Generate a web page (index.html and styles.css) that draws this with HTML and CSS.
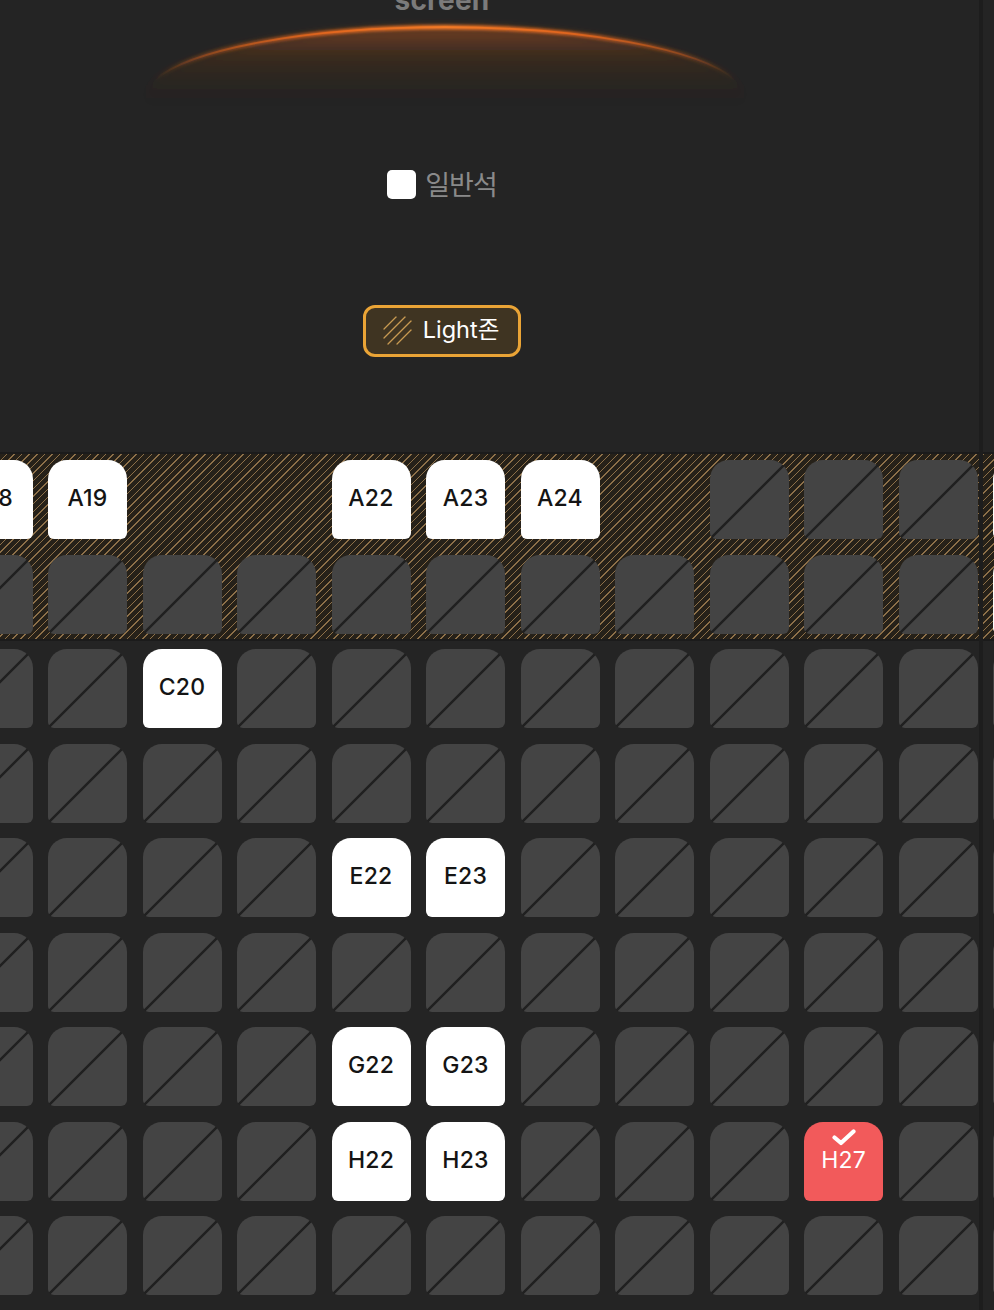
FILE: index.html
```html
<!DOCTYPE html>
<html lang="ko">
<head>
<meta charset="utf-8">
<title>좌석 선택</title>
<link rel="stylesheet" href="styles.css">
</head>
<body>
<div class="page">
  <header class="top">
    <div class="screen-label">screen</div>
    <svg class="screen-arc" width="620" height="100" viewBox="0 0 620 100">
      <defs>
        <linearGradient id="glow" gradientUnits="userSpaceOnUse" x1="0" y1="9" x2="0" y2="92">
          <stop offset="0" stop-color="#d8621c" stop-opacity="0.45"/>
          <stop offset="0.35" stop-color="#a04a18" stop-opacity="0.18"/>
          <stop offset="1" stop-color="#242424" stop-opacity="0"/>
        </linearGradient>
        <linearGradient id="line" x1="0" y1="0" x2="1" y2="0">
          <stop offset="0" stop-color="#e0641c" stop-opacity="0"/>
          <stop offset="0.08" stop-color="#e0641c" stop-opacity="0.3"/>
          <stop offset="0.3" stop-color="#e8691e" stop-opacity="0.85"/>
          <stop offset="0.5" stop-color="#f27a26" stop-opacity="1"/>
          <stop offset="0.7" stop-color="#e8691e" stop-opacity="0.85"/>
          <stop offset="0.92" stop-color="#e0641c" stop-opacity="0.3"/>
          <stop offset="1" stop-color="#e0641c" stop-opacity="0"/>
        </linearGradient>
        <filter id="soft" x="-10%" y="-50%" width="120%" height="200%">
          <feGaussianBlur stdDeviation="1.4"/>
        </filter>
        <filter id="haze" x="-10%" y="-30%" width="120%" height="160%">
          <feGaussianBlur stdDeviation="4"/>
        </filter>
      </defs>
      <ellipse cx="313" cy="80" rx="300" ry="71" fill="url(#glow)" filter="url(#haze)"/>
      <path d="M23 62 A300 71 0 0 1 603 62" fill="none" stroke="url(#line)" stroke-width="4.5" filter="url(#soft)"/>
      <path d="M23 62 A300 71 0 0 1 603 62" fill="none" stroke="url(#line)" stroke-width="1.8"/>
    </svg>
    <div class="legend">
      <span class="legend-box"></span>
      <span class="legend-text">일반석</span>
    </div>
    <div class="zone-chip">
      <svg class="zone-icon" width="30" height="30" viewBox="0 0 30 30">
        <g stroke="#c89a52" stroke-width="1.3" stroke-linecap="round">
          <line x1="1" y1="13" x2="13" y2="1"/>
          <line x1="1" y1="22" x2="22" y2="1"/>
          <line x1="5" y1="28" x2="28" y2="5"/>
          <line x1="14" y1="28" x2="28" y2="14"/>
        </g>
      </svg>
      <span class="zone-chip-text">Light존</span>
    </div>
  </header>

  <section class="seatmap">
    <div class="light-zone">
      <div class="seat-row">
        <div class="seat open">A18</div>
        <div class="seat open">A19</div>
        <div class="seat none"></div>
        <div class="seat none"></div>
        <div class="seat open">A22</div>
        <div class="seat open">A23</div>
        <div class="seat open">A24</div>
        <div class="seat none"></div>
        <div class="seat taken"></div>
        <div class="seat taken"></div>
        <div class="seat taken"></div>
        <div class="seat open">A29</div>
      </div>
      <div class="seat-row">
        <div class="seat taken"></div>
        <div class="seat taken"></div>
        <div class="seat taken"></div>
        <div class="seat taken"></div>
        <div class="seat taken"></div>
        <div class="seat taken"></div>
        <div class="seat taken"></div>
        <div class="seat taken"></div>
        <div class="seat taken"></div>
        <div class="seat taken"></div>
        <div class="seat taken"></div>
        <div class="seat open">B29</div>
      </div>
    </div>

    <div class="rows">
      <div class="seat-row">
        <div class="seat taken"></div><div class="seat taken"></div>
        <div class="seat open">C20</div>
        <div class="seat taken"></div><div class="seat taken"></div><div class="seat taken"></div>
        <div class="seat taken"></div><div class="seat taken"></div><div class="seat taken"></div>
        <div class="seat taken"></div><div class="seat taken"></div><div class="seat taken"></div>
      </div>
      <div class="seat-row">
        <div class="seat taken"></div><div class="seat taken"></div><div class="seat taken"></div>
        <div class="seat taken"></div><div class="seat taken"></div><div class="seat taken"></div>
        <div class="seat taken"></div><div class="seat taken"></div><div class="seat taken"></div>
        <div class="seat taken"></div><div class="seat taken"></div><div class="seat taken"></div>
      </div>
      <div class="seat-row">
        <div class="seat taken"></div><div class="seat taken"></div><div class="seat taken"></div>
        <div class="seat taken"></div>
        <div class="seat open">E22</div>
        <div class="seat open">E23</div>
        <div class="seat taken"></div><div class="seat taken"></div><div class="seat taken"></div>
        <div class="seat taken"></div><div class="seat taken"></div><div class="seat taken"></div>
      </div>
      <div class="seat-row">
        <div class="seat taken"></div><div class="seat taken"></div><div class="seat taken"></div>
        <div class="seat taken"></div><div class="seat taken"></div><div class="seat taken"></div>
        <div class="seat taken"></div><div class="seat taken"></div><div class="seat taken"></div>
        <div class="seat taken"></div><div class="seat taken"></div><div class="seat taken"></div>
      </div>
      <div class="seat-row">
        <div class="seat taken"></div><div class="seat taken"></div><div class="seat taken"></div>
        <div class="seat taken"></div>
        <div class="seat open">G22</div>
        <div class="seat open">G23</div>
        <div class="seat taken"></div><div class="seat taken"></div><div class="seat taken"></div>
        <div class="seat taken"></div><div class="seat taken"></div><div class="seat taken"></div>
      </div>
      <div class="seat-row">
        <div class="seat taken"></div><div class="seat taken"></div><div class="seat taken"></div>
        <div class="seat taken"></div>
        <div class="seat open">H22</div>
        <div class="seat open">H23</div>
        <div class="seat taken"></div><div class="seat taken"></div><div class="seat taken"></div>
        <div class="seat selected">
          <svg class="check" width="26" height="17" viewBox="0 0 26 17"><path d="M3.5 8.5 L10 14 L22.5 2.5" fill="none" stroke="#fff" stroke-width="4.2" stroke-linecap="round" stroke-linejoin="round"/></svg>
          H27
        </div>
        <div class="seat taken"></div><div class="seat taken"></div>
      </div>
      <div class="seat-row">
        <div class="seat taken"></div><div class="seat taken"></div><div class="seat taken"></div>
        <div class="seat taken"></div><div class="seat taken"></div><div class="seat taken"></div>
        <div class="seat taken"></div><div class="seat taken"></div><div class="seat taken"></div>
        <div class="seat taken"></div><div class="seat taken"></div><div class="seat taken"></div>
      </div>
    </div>
  </section>

  <div class="rail"></div>
</div>
</body>
</html>
```

FILE: styles.css
```css
* { box-sizing: border-box; }

html, body {
  margin: 0;
  padding: 0;
  background: #242424;
}

body {
  width: 994px;
  height: 1310px;
  overflow: hidden;
  font-family: Inter, "Noto Sans CJK KR", "Noto Sans", sans-serif;
}

.page {
  position: relative;
  width: 994px;
  height: 1310px;
  overflow: hidden;
}

.top {
  width: 884px;
  height: 452px;
  display: flex;
  flex-direction: column;
  align-items: center;
}

.screen-label {
  margin-top: -14px;
  font-size: 28px;
  line-height: 28px;
  font-weight: 700;
  color: #7b7b7b;
  letter-spacing: 0.2px;
}

.screen-arc {
  display: block;
  margin-top: 4px;
}

.legend {
  margin-top: 51px;
  display: flex;
  align-items: center;
  gap: 9px;
}

.legend-box {
  width: 29px;
  height: 29px;
  border-radius: 5px;
  background: #ffffff;
}

.legend-text {
  font-family: "Noto Sans CJK KR", sans-serif;
  font-size: 27px;
  line-height: 30px;
  color: #8a8a8a;
  letter-spacing: -1px;
}

.zone-chip {
  margin-top: 106px;
  width: 158px;
  height: 52px;
  border: 3px solid #eaa436;
  border-radius: 12px;
  background: #3f3422;
  display: flex;
  align-items: center;
  justify-content: center;
  gap: 10px;
  padding-right: 2px;
}

.zone-icon {
  display: block;
}

.zone-chip-text {
  font-size: 23.5px;
  line-height: 28px;
  color: #ffffff;
  font-weight: 400;
  padding-bottom: 2px;
}

.seatmap {
  width: 994px;
}

.light-zone {
  border-top: 2px solid #1b1b1b;
  border-bottom: 2px solid #1b1b1b;
  padding: 6px 0 5px;
  display: flex;
  flex-direction: column;
  gap: 15.5px;
  background: repeating-linear-gradient(135deg, #262119 0 4.3px, #8d7049 4.3px 5.3px, #262119 5.3px 5.4px);
}

.rows {
  margin-top: 8.5px;
  display: flex;
  flex-direction: column;
  gap: 15.5px;
}

.seat-row {
  display: grid;
  grid-template-columns: repeat(12, 79px);
  column-gap: 15.5px;
  margin-left: -46.5px;
}

.seat {
  position: relative;
  height: 79px;
  border-radius: 19px 19px 6px 6px;
  display: flex;
  align-items: center;
  justify-content: center;
  padding-bottom: 3px;
  font-size: 23px;
  font-weight: 500;
  letter-spacing: 0.2px;
  overflow: hidden;
}

.seat.none {
  visibility: hidden;
}

.seat.open {
  background: #ffffff;
  color: #141414;
}

.seat.taken {
  background:
    linear-gradient(to bottom right, transparent calc(50% - 1.6px), #202020 calc(50% - 0.9px), #202020 calc(50% + 0.9px), transparent calc(50% + 1.6px)),
    #444444;
}

.seat.selected {
  background: #f25a5b;
  color: #ffffff;
  font-weight: 400;
}

.check {
  position: absolute;
  top: 7px;
  left: 50%;
  transform: translateX(-50%);
}

.rail {
  position: absolute;
  top: 0;
  left: 979px;
  width: 4px;
  height: 1310px;
  background: #1d1d1d;
}
```
